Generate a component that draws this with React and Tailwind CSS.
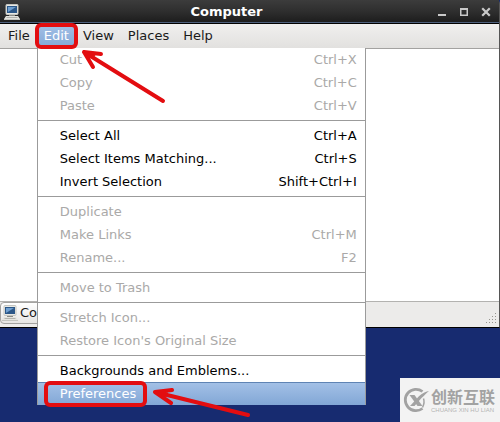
import React from 'react';

const MENUS = ['File', 'Edit', 'View', 'Places', 'Help'];

const EDIT_GROUPS = [
  [
    { label: 'Cut', keys: 'Ctrl+X', disabled: true },
    { label: 'Copy', keys: 'Ctrl+C', disabled: true },
    { label: 'Paste', keys: 'Ctrl+V', disabled: true },
  ],
  [
    { label: 'Select All', keys: 'Ctrl+A' },
    { label: 'Select Items Matching...', keys: 'Ctrl+S' },
    { label: 'Invert Selection', keys: 'Shift+Ctrl+I' },
  ],
  [
    { label: 'Duplicate', disabled: true },
    { label: 'Make Links', keys: 'Ctrl+M', disabled: true },
    { label: 'Rename...', keys: 'F2', disabled: true },
  ],
  [{ label: 'Move to Trash', disabled: true }],
  [
    { label: 'Stretch Icon...', disabled: true },
    { label: "Restore Icon's Original Size", disabled: true },
  ],
  [{ label: 'Backgrounds and Emblems...' }, { label: 'Preferences', active: true }],
];

function ComputerIcon() {
  return (
    <svg className="size-4 shrink-0" viewBox="0 0 16 16" aria-hidden="true">
      <rect x="2" y="0.5" width="12" height="10" rx="0.8" fill="#e9e9e4" stroke="#c4c5c0" />
      <rect x="3" y="2" width="10" height="7" fill="#2b5788" />
      <path d="M4 3h8L4 8z" fill="#6f9fd0" />
      <path d="M5 11h6v1H5z" fill="#8a8b86" />
      <path d="M2 12h12l2 3v1H0v-1z" fill="#e4e4df" />
      <path d="M2.500 13.500h11" stroke="#a5a6a1" strokeWidth="0.800" />
      <path d="M0 15.500h16" stroke="#b9bab5" strokeWidth="0.800" />
    </svg>
  );
}

function TitleBar() {
  return (
    <header className="flex h-6 items-center border-b border-black bg-linear-to-b from-[#3c3c3c] via-[#2e2e2e] to-[#1c1c1c] pr-2 pl-1 text-[#c9c9c9] shadow-[inset_0_-1px_0_#4d5f7c]">
      <ComputerIcon />
      <h1 className="flex-1 text-center text-[13px] leading-5 font-bold text-white">Computer</h1>
      <div className="flex gap-2">
        <button type="button" aria-label="Minimize" className="size-3.5">
          <svg className="size-3.5" viewBox="0 0 14 14">
            <path d="M5 9h8v2H5z" fill="currentColor" />
          </svg>
        </button>
        <button type="button" aria-label="Maximize" className="size-3.5">
          <svg className="size-3.5" viewBox="0 0 14 14">
            <path d="M5 3h8v8H5zM6.500 5v4.500h5V5z" fill="currentColor" fillRule="evenodd" />
          </svg>
        </button>
        <button type="button" aria-label="Close" className="size-3.5">
          <svg className="size-3.5" viewBox="0 0 14 14">
            <path d="M6 4l6 6M12 4l-6 6" fill="none" stroke="currentColor" strokeWidth="2.200" strokeLinecap="square" />
          </svg>
        </button>
      </div>
    </header>
  );
}

function RedArrow({ className, box, d }) {
  return (
    <svg className={`pointer-events-none absolute z-20 ${className}`} viewBox={box} aria-hidden="true">
      <path d={d} fill="none" stroke="#e30d10" strokeWidth="4" strokeLinecap="round" strokeLinejoin="round" />
    </svg>
  );
}

function MenuItem({ item }) {
  let color = 'text-black';
  if (item.disabled) color = 'text-[#aaa9a8]';
  if (item.active) color = 'border-t border-[#5f84b4] bg-linear-to-b from-[#a3c0e6] to-[#82a7d6] text-white';

  return (
    <li className="relative">
      <button
        type="button"
        role="menuitem"
        disabled={item.disabled}
        className={`flex h-[23px] w-full items-center justify-between pr-2 pl-[22px] text-left ${color}`}
      >
        <span>{item.label}</span>
        {item.keys && <span>{item.keys}</span>}
      </button>
      {item.active && (
        <>
          <span className="pointer-events-none absolute -top-px -bottom-0.5 left-1.5 w-[103px] rounded-md border-4 border-[#e30d10]" />
          <RedArrow className="top-1.5 left-[114px] h-8 w-[100px]" box="0 0 100 32" d="M96 27L3 4M20 2L3 4L19 15M3 4L14 5" />
        </>
      )}
    </li>
  );
}

function EditMenu() {
  return (
    <div role="menu" className="absolute top-full left-0 z-10 w-[329px] border-x border-[#9b9b9b] bg-white">
      {EDIT_GROUPS.map((group, i) => (
        <React.Fragment key={i}>
          {i > 0 && <hr className="my-[3px] border-t border-[#9b9b9b]" />}
          <ul>
            {group.map((item) => (
              <MenuItem key={item.label} item={item} />
            ))}
          </ul>
        </React.Fragment>
      ))}
    </div>
  );
}

function MenuBar() {
  return (
    <nav className="flex h-[25px] border-b border-[#a3a2a0] bg-linear-to-b from-[#f0efee] to-[#e2e1df] pl-px">
      {MENUS.map((name) =>
        name === 'Edit' ? (
          <div key={name} className="relative">
            <button type="button" className="h-full bg-linear-to-b from-[#a3c0e6] to-[#82a7d6] px-[7px] text-white">
              {name}
            </button>
            <EditMenu />
            <span className="pointer-events-none absolute -inset-x-0.5 -top-px -bottom-px z-20 rounded-md border-4 border-[#e30d10]" />
            <RedArrow className="top-6 left-11 h-[58px] w-[88px]" box="0 0 88 58" d="M82 53L3 4M20 6L3 4L12 19M3 4L12 8" />
          </div>
        ) : (
          <button key={name} type="button" className="px-[7px]">
            {name}
          </button>
        )
      )}
    </nav>
  );
}

function StatusBar() {
  return (
    <footer className="flex h-[26px] items-start justify-between border-t border-[#b3b2b0] bg-[#ecebea]">
      <button
        type="button"
        className="flex h-[22px] w-24 items-center gap-0.5 rounded border border-[#a3a2a0] bg-linear-to-b from-white to-[#e6e5e3] px-px"
      >
        <ComputerIcon />
        Co
      </button>
      <svg className="mt-2.5 mr-0.5 size-3" viewBox="0 0 12 12" fill="#96958f" aria-hidden="true">
        <path d="M10 1h1v1h-1zM7 4h1v1H7zM10 4h1v1h-1zM4 7h1v1H4zM7 7h1v1H7zM10 7h1v1h-1zM1 10h1v1H1zM4 10h1v1H4zM7 10h1v1H7zM10 10h1v1h-1z" />
      </svg>
    </footer>
  );
}

function Watermark() {
  return (
    <aside className="absolute right-0 bottom-0 flex h-11 w-[100px] items-center gap-0.5 bg-[#f3f3f3] pl-[3px] text-[#a2a2a2]">
      <svg className="size-[26px] shrink-0" viewBox="0 0 26 26" fill="none" stroke="currentColor" aria-hidden="true">
        <path d="M19.500 4.500A10.700 10.700 0 1 0 19.500 21.500" strokeWidth="2.800" />
        <path d="M6.500 8h5l8 11h-5z" fill="currentColor" stroke="none" />
        <path d="M26 4C20 5 16 9 13 12.500L7 19h4.500l4-4.500C18.500 11 21 8.500 26 4z" fill="currentColor" stroke="none" />
        <path d="M20.500 11.500q1.500 4-1 9" strokeWidth="1.500" />
      </svg>
      <div className="whitespace-nowrap">
        <p className="font-['Noto_Sans_CJK_SC',sans-serif] text-base leading-5 font-bold">创新互联</p>
        <p className="font-['Liberation_Sans',sans-serif] text-[6px] leading-2 text-[#b4b4b4]">CHUANG XIN HU LIAN</p>
      </div>
    </aside>
  );
}

export default function App() {
  return (
    <div className="relative flex min-h-screen flex-col overflow-hidden bg-[#172b70] pb-[94px] font-['DejaVu_Sans',sans-serif] text-[13px] leading-5 text-[#1a1a1a]">
      <div className="flex flex-1 flex-col rounded-tr border-r border-b border-r-[#555] border-b-black">
        <TitleBar />
        <MenuBar />
        <main className="flex-1 bg-white" />
        <StatusBar />
      </div>
      <Watermark />
    </div>
  );
}
